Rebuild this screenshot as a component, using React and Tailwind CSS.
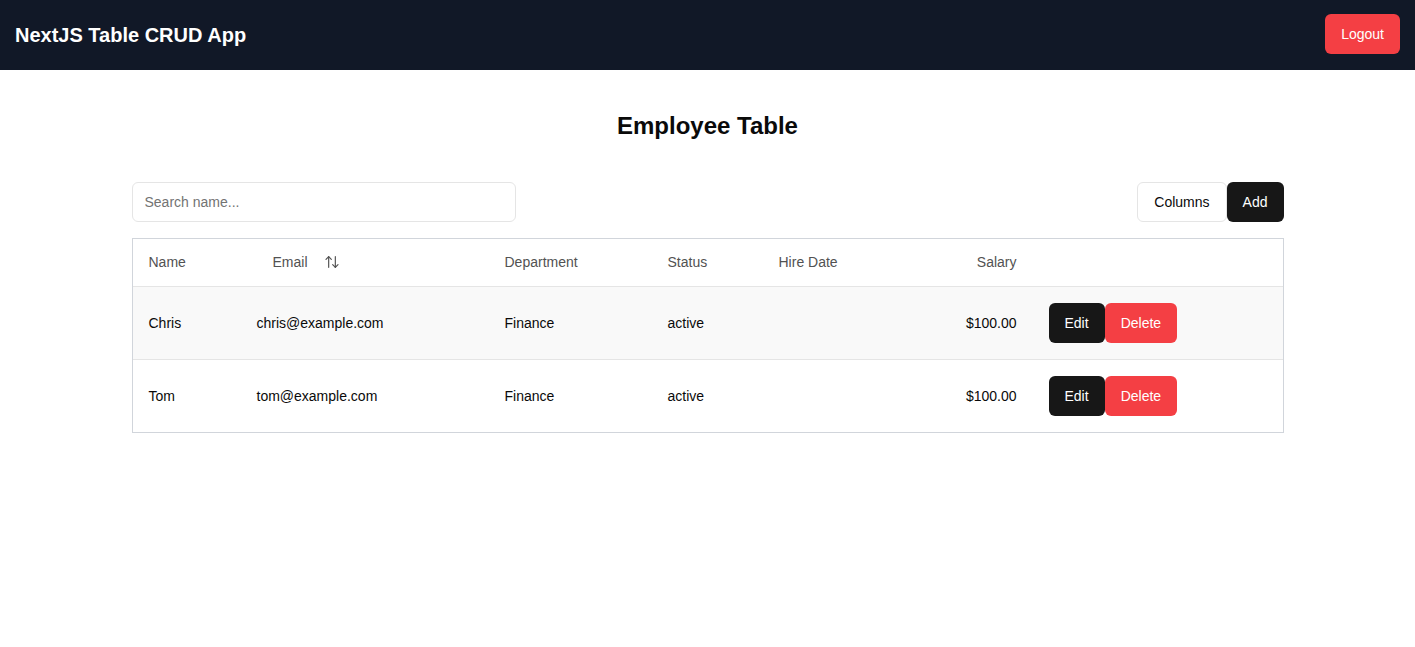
import React from 'react';

const employees = [
  { name: 'Chris', email: 'chris@example.com', department: 'Finance', status: 'active', hireDate: '', salary: '$100.00' },
  { name: 'Tom', email: 'tom@example.com', department: 'Finance', status: 'active', hireDate: '', salary: '$100.00' },
];

const SortIcon = () => (
  <svg width="16" height="16" viewBox="0 0 24 24" fill="none" stroke="currentColor" strokeWidth="1.75" strokeLinecap="round" strokeLinejoin="round">
    <path d="m21 16-4 4-4-4" />
    <path d="M17 20V4" />
    <path d="m3 8 4-4 4 4" />
    <path d="M7 4v16" />
  </svg>
);

const App = () => {
  return (
    <div className="min-h-screen bg-white text-[#0a0a0a]" style={{ fontFamily: '"Liberation Sans", Arial, sans-serif' }}>
      <header className="h-[70px] bg-[#111827] flex items-center justify-between px-[15px]">
        <h1 className="text-white text-xl font-bold">NextJS Table CRUD App</h1>
        <button className="h-10 px-4 rounded-md bg-[#f43f44] text-white text-sm -mt-[2px]">Logout</button>
      </header>

      <main className="max-w-[1152px] mx-auto pt-[42px]">
        <h2 className="text-2xl font-bold text-center h-[28px] leading-[28px]">Employee Table</h2>

        <div className="flex items-center justify-between mt-[42px] mb-4">
          <input
            className="w-96 h-10 rounded-md border border-[#e5e5e5] px-3 text-sm placeholder:text-[#737373] outline-none"
            placeholder="Search name..."
          />
          <div className="flex">
            <button className="h-10 px-4 rounded-md border border-[#e5e5e5] bg-white text-sm">Columns</button>
            <button className="h-10 px-4 rounded-md bg-[#171717] text-white text-sm">Add</button>
          </div>
        </div>

        <div className="border border-[#d1d5db]">
          <table className="w-full table-fixed text-sm">
            <colgroup>
              <col className="w-[124px]" />
              <col className="w-[248px]" />
              <col className="w-[163px]" />
              <col className="w-[111px]" />
              <col className="w-[140px]" />
              <col className="w-[114px]" />
              <col />
            </colgroup>
            <thead>
              <tr className="h-[47px] border-b border-[#e5e5e5] text-[#525252] text-left">
                <th className="px-4 font-normal">Name</th>
                <th className="font-normal">
                  <button className="h-9 px-4 inline-flex items-center gap-4">
                    Email <SortIcon />
                  </button>
                </th>
                <th className="px-0 font-normal">Department</th>
                <th className="px-0 font-normal">Status</th>
                <th className="px-0 font-normal">Hire Date</th>
                <th className="px-4 font-normal text-right">Salary</th>
                <th></th>
              </tr>
            </thead>
            <tbody>
              {employees.map((emp, i) => (
                <tr key={emp.name} className={`${i === 0 ? 'bg-[#f9f9f9] border-b border-[#e5e5e5]' : ''}`}>
                  <td className="px-4 py-4">{emp.name}</td>
                  <td className="py-4">{emp.email}</td>
                  <td className="py-4">{emp.department}</td>
                  <td className="py-4">{emp.status}</td>
                  <td className="py-4">{emp.hireDate}</td>
                  <td className="px-4 py-4 text-right">{emp.salary}</td>
                  <td className="px-4 py-4">
                    <div className="flex">
                      <button className="h-10 px-4 rounded-md bg-[#171717] text-white">Edit</button>
                      <button className="h-10 px-4 rounded-md bg-[#f43f44] text-white">Delete</button>
                    </div>
                  </td>
                </tr>
              ))}
            </tbody>
          </table>
        </div>
      </main>
    </div>
  );
};

export default App;
